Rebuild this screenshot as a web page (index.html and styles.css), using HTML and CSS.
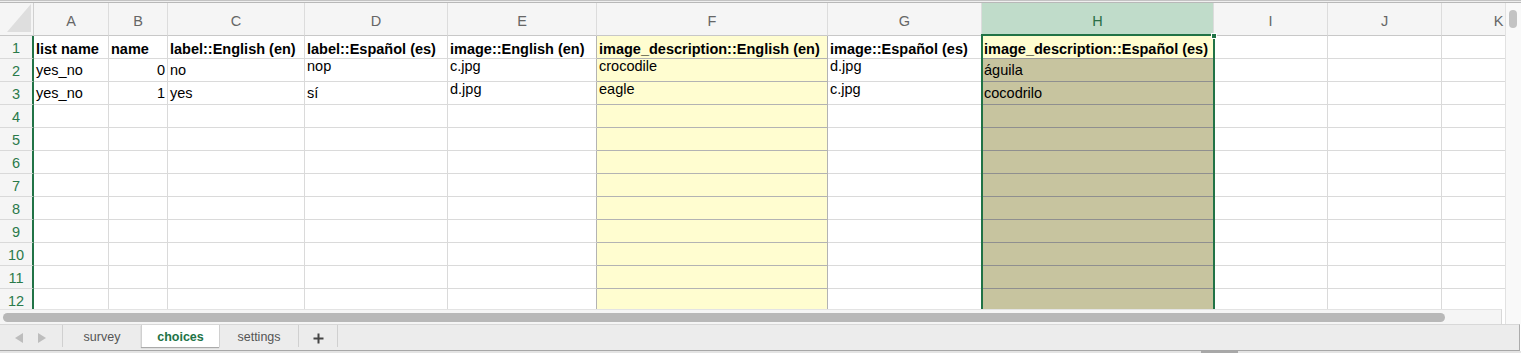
FILE: index.html
```html
<!DOCTYPE html>
<html lang="es">
<head>
<meta charset="utf-8">
<title>choices</title>
<link rel="stylesheet" href="styles.css">
</head>
<body>
<div class="app">
  <div class="topline"></div>
  <div class="main">
    <div class="sheet">
      <div class="gridwrap">
        <div class="grid">
          <div class="corner"><svg width="33" height="32" viewBox="0 0 33 32"><polygon points="31,1 31,29 7,29" fill="#dedede"/></svg></div>
          <div class="hd">A</div><div class="hd">B</div><div class="hd">C</div><div class="hd">D</div><div class="hd">E</div><div class="hd">F</div><div class="hd">G</div><div class="hd sel">H</div><div class="hd">I</div><div class="hd">J</div><div class="hd">K</div>

          <div class="rh">1</div>
          <div class="c b">list name</div><div class="c b">name</div><div class="c b">label::English (en)</div><div class="c b">label::Español (es)</div><div class="c b e">image::English (en)</div><div class="c b f">image_description::English (en)</div><div class="c b">image::Español (es)</div><div class="c b h1">image_description::Español (es)</div><div class="c"></div><div class="c"></div><div class="c"></div>

          <div class="rh">2</div>
          <div class="c">yes_no</div><div class="c r">0</div><div class="c">no</div><div class="c t">nop</div><div class="c t e">c.jpg</div><div class="c t f">crocodile</div><div class="c t">d.jpg</div><div class="c h">águila</div><div class="c"></div><div class="c"></div><div class="c"></div>

          <div class="rh">3</div>
          <div class="c">yes_no</div><div class="c r">1</div><div class="c">yes</div><div class="c">sí</div><div class="c t e">d.jpg</div><div class="c t f">eagle</div><div class="c t">c.jpg</div><div class="c h">cocodrilo</div><div class="c"></div><div class="c"></div><div class="c"></div>

          <div class="rh">4</div>
          <div class="c"></div><div class="c"></div><div class="c"></div><div class="c"></div><div class="c e"></div><div class="c f"></div><div class="c"></div><div class="c h"></div><div class="c"></div><div class="c"></div><div class="c"></div>

          <div class="rh">5</div>
          <div class="c"></div><div class="c"></div><div class="c"></div><div class="c"></div><div class="c e"></div><div class="c f"></div><div class="c"></div><div class="c h"></div><div class="c"></div><div class="c"></div><div class="c"></div>

          <div class="rh">6</div>
          <div class="c"></div><div class="c"></div><div class="c"></div><div class="c"></div><div class="c e"></div><div class="c f"></div><div class="c"></div><div class="c h"></div><div class="c"></div><div class="c"></div><div class="c"></div>

          <div class="rh">7</div>
          <div class="c"></div><div class="c"></div><div class="c"></div><div class="c"></div><div class="c e"></div><div class="c f"></div><div class="c"></div><div class="c h"></div><div class="c"></div><div class="c"></div><div class="c"></div>

          <div class="rh">8</div>
          <div class="c"></div><div class="c"></div><div class="c"></div><div class="c"></div><div class="c e"></div><div class="c f"></div><div class="c"></div><div class="c h"></div><div class="c"></div><div class="c"></div><div class="c"></div>

          <div class="rh">9</div>
          <div class="c"></div><div class="c"></div><div class="c"></div><div class="c"></div><div class="c e"></div><div class="c f"></div><div class="c"></div><div class="c h"></div><div class="c"></div><div class="c"></div><div class="c"></div>

          <div class="rh">10</div>
          <div class="c"></div><div class="c"></div><div class="c"></div><div class="c"></div><div class="c e"></div><div class="c f"></div><div class="c"></div><div class="c h"></div><div class="c"></div><div class="c"></div><div class="c"></div>

          <div class="rh">11</div>
          <div class="c"></div><div class="c"></div><div class="c"></div><div class="c"></div><div class="c e"></div><div class="c f"></div><div class="c"></div><div class="c h"></div><div class="c"></div><div class="c"></div><div class="c"></div>

          <div class="rh">12</div>
          <div class="c"></div><div class="c"></div><div class="c"></div><div class="c"></div><div class="c e"></div><div class="c f"></div><div class="c"></div><div class="c h"></div><div class="c"></div><div class="c"></div><div class="c"></div>
        </div>
        <div class="selbox"></div>
        <div class="handle"></div>
      </div>
      <div class="hscroll">
        <div class="htrack"><div class="hthumb"></div></div>
      </div>
    </div>
    <div class="vscroll"><div class="vthumb"></div></div>
  </div>
  <div class="tabbar">
    <div class="nav"><svg width="62" height="22" viewBox="0 0 62 22"><polygon points="15,13 23,8 23,18" fill="#bdbdbd"/><polygon points="46,13 38,8 38,18" fill="#bdbdbd"/></svg></div>
    <div class="tab w79">survey</div>
    <div class="tab active w78">choices</div>
    <div class="tab w79">settings</div>
    <div class="tab plus"><svg width="11" height="11" viewBox="0 0 11 11"><path d="M5.5 0.5V10.5M0.5 5.5H10.5" stroke="#454545" stroke-width="2"/></svg></div>
    <div class="tab end"></div>
  </div>
  <div class="bottomstrip"><div class="grip"></div></div>
</div>
</body>
</html>
```

FILE: styles.css
```css
* { box-sizing: border-box; }

body {
  margin: 0;
  background: #fff;
  font-family: "Liberation Sans", Arial, sans-serif;
}

.app {
  width: 1521px;
  height: 353px;
  overflow: hidden;
}

.topline {
  height: 3px;
  border-top: 1px solid #c3c3c3;
  border-bottom: 1px solid #b8b8b8;
  background: #efefef;
}

.main {
  display: flex;
  height: 321px;
}

.sheet {
  width: 1505px;
  display: flex;
  flex-direction: column;
}

.gridwrap {
  position: relative;
  width: 1505px;
  height: 306px;
  overflow: hidden;
}

.grid {
  display: grid;
  grid-template-columns: 34px 75px 59px 137px 143px 149px 231px 154px 232px 114px 114px 114px;
  grid-template-rows: 33px repeat(12, 23px);
  width: 1556px;
  background: #fff;
}

.corner {
  background: #f5f5f5;
  border-right: 1px solid #d0d0d0;
  border-bottom: 1px solid #c8c8c8;
}

.corner svg { display: block; }

.hd {
  background: #f5f5f5;
  border-right: 1px solid #dcdcdc;
  border-bottom: 1px solid #c8c8c8;
  display: flex;
  align-items: center;
  justify-content: center;
  padding-top: 3px;
  font-size: 14.5px;
  color: #666;
}

.hd.sel {
  background: #c0dcca;
  color: #2b6e46;
}

.rh {
  background: #f5f5f5;
  border-right: 2px solid #217346;
  border-bottom: 1px solid #d9d9d9;
  display: flex;
  align-items: center;
  justify-content: center;
  padding-top: 1px;
  font-size: 14.5px;
  color: #2a7a4a;
}

.c {
  border-right: 1px solid #dadada;
  border-bottom: 1px solid #dadada;
  display: flex;
  align-items: flex-end;
  padding: 0 2px 2px 2px;
  font-size: 14.5px;
  line-height: 17px;
  white-space: nowrap;
  color: #000;
}

.b {
  font-weight: bold;
  padding-bottom: 0;
}

.r { justify-content: flex-end; }

.t {
  align-items: flex-start;
  line-height: 14px;
}

.e { border-right-color: #b3b3b3; }

.f {
  background: #fffdd0;
  border-right-color: #b3b3b3;
  border-bottom-color: #b3b3b3;
}

.h {
  background: #c7c49f;
  border-bottom-color: #8f8f8f;
}

.h1 {
  background: #fffdd0;
  border-bottom-color: #9a9a9a;
}

.selbox {
  position: absolute;
  left: 981px;
  top: 31px;
  width: 234px;
  height: 300px;
  border: 2px solid #217346;
  border-bottom: none;
}

.handle {
  position: absolute;
  left: 1211px;
  top: 30px;
  width: 6px;
  height: 6px;
  background: #217346;
  border: 1px solid #fff;
}

.hscroll {
  display: flex;
  height: 15px;
}

.htrack {
  width: 1502px;
  height: 15px;
  background: #f5f5f5;
  border-top: 1px solid #e3e3e3;
  border-right: 1px solid #d8d8d8;
  padding: 3px 0 0 3px;
}

.hthumb {
  width: 1442px;
  height: 9px;
  border-radius: 5px;
  background: #b8b8b8;
}

.vscroll {
  width: 16px;
  background: #f9f9f9;
  border-left: 1px solid #e2e2e2;
  padding: 7px 0 0 3px;
}

.vthumb {
  width: 8px;
  height: 18px;
  border-radius: 4px;
  background: #c3c3c3;
}

.tabbar {
  display: flex;
  width: 1520px;
  height: 27px;
  background: #ececec;
  border-top: 1px solid #d8d8d8;
  border-bottom: 1px solid #a7a7a7;
  border-right: 1px solid #acacac;
}

.nav {
  width: 62px;
  height: 22px;
}

.nav svg { display: block; }

.tab {
  height: 22px;
  border-left: 1px solid #d0d0d0;
  display: flex;
  align-items: center;
  justify-content: center;
  padding-top: 2px;
  font-size: 12.5px;
  color: #555;
}

.w79 { width: 79px; }
.w78 { width: 78px; }

.tab.active {
  background: #fff;
  color: #217346;
  font-weight: bold;
  box-shadow: 0 1px 1px rgba(0, 0, 0, 0.28);
}

.tab.plus {
  width: 39px;
  padding-top: 4px;
}

.tab.plus svg { display: block; }

.tab.end { width: 1px; }

.bottomstrip {
  height: 2px;
  background: #e4e4e4;
  padding-left: 1201px;
}

.grip {
  width: 37px;
  height: 2px;
  background: #a8a8a8;
}
```
